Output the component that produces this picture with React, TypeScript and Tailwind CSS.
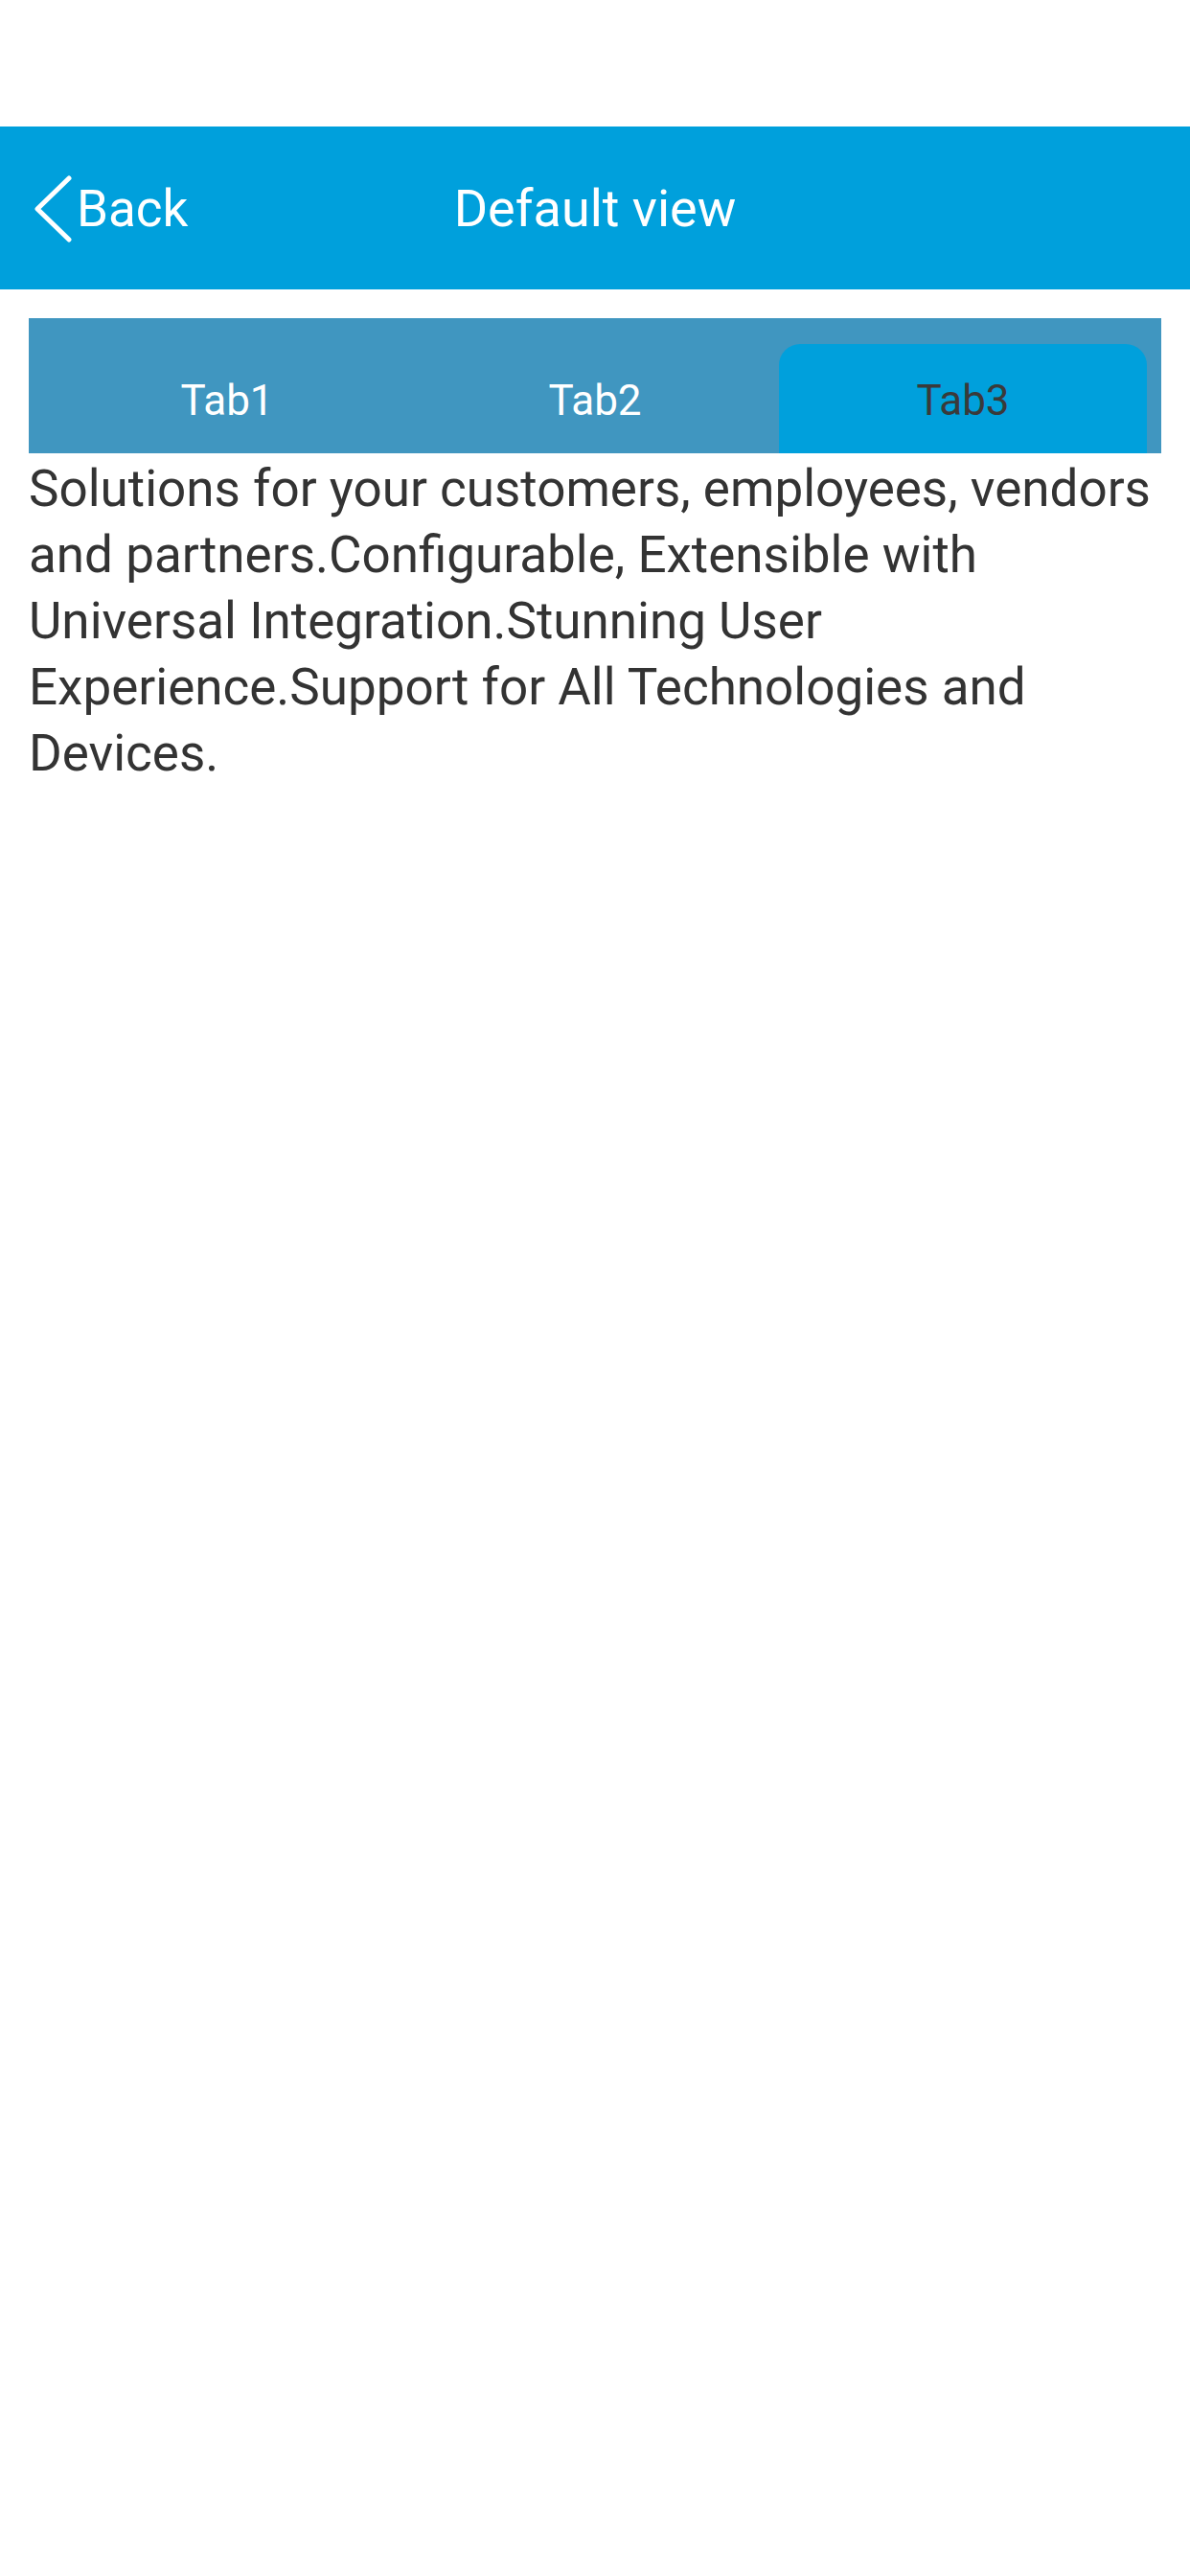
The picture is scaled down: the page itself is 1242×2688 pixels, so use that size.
import { useState } from "react";

const TABS = ["Tab1", "Tab2", "Tab3"];

export default function App() {
  const [active, setActive] = useState(2);

  return (
    <div className="min-h-[2688px] w-[1242px] bg-white" style={{ fontFamily: "Roboto, 'Noto Sans', sans-serif" }}>
      <div className="h-[132px]" />

      <div className="relative flex h-[170px] items-center bg-[#00a0dc] text-white">
        <button className="flex items-center pl-[35px] pt-[2px]">
          <svg width="40" height="70" viewBox="0 0 40 70" fill="none">
            <path d="M37 3 L4 35 L37 67" stroke="white" strokeWidth="5" strokeLinecap="round" strokeLinejoin="round" />
          </svg>
          <span className="ml-[5px] text-[53px] leading-none">Back</span>
        </button>
        <div className="pointer-events-none absolute inset-x-0 top-0 flex h-full items-center justify-center pt-[2px]">
          <span className="text-[54px] leading-none">Default view</span>
        </div>
      </div>

      <div className="px-[30px]">
        <div className="mt-[30px] flex h-[141px] bg-[#4096c0] px-[15px] pt-[27px]">
          {TABS.map((t, i) => (
            <button
              key={t}
              onClick={() => setActive(i)}
              className={
                i === active
                  ? "flex flex-1 items-center justify-center rounded-t-[22px] bg-[#00a0dc] pt-[4px] text-[44px] text-[#3a3a3a]"
                  : "flex flex-1 items-center justify-center pt-[4px] text-[44px] text-white"
              }
            >
              {t}
            </button>
          ))}
        </div>
        <p className="mt-[3px] text-[53px] leading-[69px] text-[#333333]">
          Solutions for your customers, employees, vendors and partners.Configurable, Extensible with Universal Integration.Stunning User Experience.Support for All Technologies and Devices.
        </p>
      </div>
    </div>
  );
}
